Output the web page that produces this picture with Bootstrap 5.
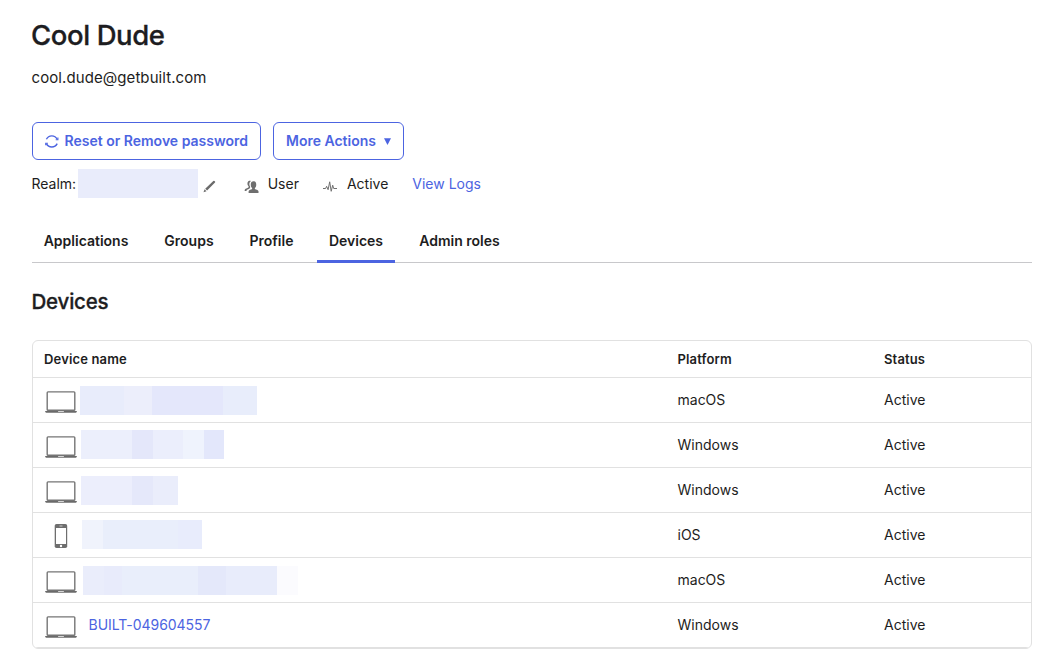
<!DOCTYPE html>
<html lang="en">
<head>
<meta charset="utf-8">
<meta name="viewport" content="width=device-width, initial-scale=1">
<title>Cool Dude - Devices</title>
<link href="https://cdn.jsdelivr.net/npm/bootstrap@5.3.0/dist/css/bootstrap.min.css" rel="stylesheet">
<style>
:root{--ink:#1d1d21;--brand:#4c64e1;--rule:#e1e1e1}
body{font:14px/20px Inter,"Liberation Sans",sans-serif;color:var(--ink);background:#fff;overflow:hidden}
.page{width:1000px;margin-left:32px;padding-top:18px}
.page svg{display:block;flex:none}
.user-name{font-size:27.5px;line-height:34px;font-weight:500;letter-spacing:-.4px;margin:0 0 0 -1px;-webkit-text-stroke:.3px}
.user-mail{font-size:15px;line-height:20px;letter-spacing:.08px;margin:16px 0 34px -.5px}
.btn-act{--bs-btn-color:var(--brand);--bs-btn-border-color:var(--brand);--bs-btn-font-weight:600;--bs-btn-font-size:14px;--bs-btn-line-height:20px;--bs-btn-padding-x:12px;--bs-btn-padding-y:8px;--bs-btn-border-radius:6px;height:38px;white-space:nowrap}
.w-reset{width:229px}
.w-more{width:131px}
.meta{height:29px;margin:9px 0 0 -.5px}
.blur-bar{height:29px;flex:none}
.tabs{height:44px;margin-top:21px;border-bottom:1px solid #c8c8cb;--bs-nav-link-color:var(--ink)}
.tabs .nav-link{font-size:14px;line-height:20px;font-weight:600;padding:12px 0 8px;height:44px;text-align:center;border-bottom:3px solid transparent;white-space:nowrap}
.tabs .nav-link.active{border-color:var(--brand);color:var(--ink)}
.section-title{font-size:20.5px;line-height:26px;font-weight:500;letter-spacing:-.2px;margin:26px 0 25px -.5px;-webkit-text-stroke:.3px}
.panel{border:1px solid var(--rule);border-radius:6px;height:309px;overflow:hidden}
.devices{--bs-table-color:var(--ink);--bs-table-bg:transparent;table-layout:fixed;border-collapse:separate;border-spacing:0;margin:0}
.devices>:not(caption)>*>*{border-bottom:1px solid var(--rule);padding:0 0 0 12px;vertical-align:middle}
.devices>:not(caption)>*>:first-child{padding-left:11px}
.devices thead th{height:37px;font-size:13px;line-height:18px;font-weight:600;letter-spacing:.15px}
.devices tbody td{height:45px}
.c-name{width:632.5px}
.c-platform{width:206.5px}
.device{height:44px}
.device .glyph{width:32px;margin:4px .5px 0 .5px}
.device .phone{margin-top:2px}
.r0{width:120px;margin-left:2px;background:#e9ecfb}
.r1{width:177px;margin-left:3px;background:linear-gradient(90deg,#e8ecfb 44px,#eceefb 44px 72px,#e4e7fb 72px 143px,#e8edfb 143px)}
.r2{width:143px;margin:-2px 0 0 4px;background:linear-gradient(90deg,#eceffc 51px,#e4e7fa 51px 72px,#ebeefc 72px 102px,#eff3fd 102px 123px,#e3e7fb 123px)}
.r3{width:97px;margin-left:4px;background:linear-gradient(90deg,#eceefc 51px,#e5e8fa 51px 72px,#eaedfb 72px)}
.r4{width:120px;margin:-2px 0 0 5px;background:linear-gradient(90deg,#f0f3fc 21px,#e9eefb 21px 96px,#e8ecfc 96px)}
.r5{width:215px;margin-left:6px;background:linear-gradient(90deg,#eaedfb 21px,#e8ebfb 21px 39px,#e9eefb 39px 115px,#e4e8fa 115px 143px,#e8ecfb 143px 194px,#fbfbfe 194px)}
.link-brand{color:var(--brand);text-decoration:none}
.serial{margin-left:11.500px;letter-spacing:-.03px}
</style>
</head>
<body>
<svg width="0" height="0" class="position-absolute" aria-hidden="true">
  <symbol id="laptop" viewBox="0 0 32 23">
    <rect x="2.200" y=".9" width="27.600" height="18.300" rx=".8" fill="#fff" stroke="#757575" stroke-width="1.400"/>
    <path d="M.2 20h31.600v.9q-.8.9-2.400.9H2.600Q1 21.800.2 20.900z" fill="#6a6a6a"/>
    <path d="M13 20h6v.4q-.5.5-1 .5h-4q-.5 0-1-.5z" fill="#d5d5d5"/>
  </symbol>
</svg>
<main class="page">
  <h1 class="user-name">Cool Dude</h1>
  <p class="user-mail">cool.dude@getbuilt.com</p>

  <div class="d-flex" style="gap:12px">
    <button class="btn btn-act w-reset d-flex align-items-center" type="button">
      <svg width="14" height="13" viewBox="0 0 14 13" fill="none" stroke="#4c64e1" stroke-width="1.400"><path d="M1.400 4.300C2.500 2.100 4.400.9 6.800.9s4.300 1.200 5.400 3.400M12.200 8.600C11.100 10.800 9.200 12 6.800 12s-4.300-1.200-5.400-3.400"/><path d="M12.900 2.600v2.100h-2.200M.7 10.300V8.200h2.200" stroke-width="1.100"/></svg>
      <span style="margin-left:5.500px">Reset or Remove password</span>
    </button>
    <button class="btn btn-act w-more d-flex align-items-center" type="button">
      <span>More Actions</span>
      <svg width="7" height="7" viewBox="0 0 7 7" style="margin-left:7.500px"><path d="M0 .3h7L3.500 6.900z" fill="#4c64e1"/></svg>
    </button>
  </div>

  <div class="meta d-flex align-items-center">
    <span>Realm:</span><span class="blur-bar r0"></span>
    <svg width="13" height="13" viewBox="0 0 13 13" style="margin:5px 0 0 4.500px"><path d="M.5 12.300l1.100-3 1.900 1.900zM2.200 8.700L10.300 .9q.6-.5 1.200 0l.5.5q.5.600 0 1.200L4.100 10.600z" fill="#6b6b6b"/></svg>
    <svg width="15" height="13" viewBox="0 0 15 13" style="margin:6px 0 0 28.500px" fill="#6e6e6e"><path d="M4.600 11.900V13H14.500v-1.700c0-1.200-2.800-1.700-3.500-2.200-.3-.4-.2-1 .1-1.400 1-.9 1.200-2 1.100-3.700C12.100 2.200 11.100 1.200 9.500 1.200S6.900 2.200 6.800 4c-.1 1.700.1 2.800 1.100 3.700.3.400.4 1 .1 1.400-.7.500-3.400 1-3.400 2.200z"/><path d="M6.900.9C5.700.3 3.800.7 3.500 2.800c-.2 1.900.1 2.400 1 3.400.3.500.2 1-.2 1.300C3.600 8 .8 8.600.7 10v1H2.600V10l2.700-1.300q1.300-.8.800-2.200C5 5.200 4.900 2 6.900.9z"/></svg>
    <span style="margin-left:8.500px">User</span>
    <svg width="14" height="11" viewBox="0 0 14 11" style="margin:5px 0 0 24px" fill="none" stroke="#707070" stroke-linejoin="round"><path d="M0 7.500h2.600l1-2.200 1.500 3.400L6.700.8l1.500 9.500 1.500-6.100 1 3.300H14"/></svg>
    <span style="margin-left:10px">Active</span>
    <a class="link-brand" href="#" style="margin-left:24px">View Logs</a>
  </div>

  <nav class="nav tabs flex-nowrap">
    <a class="nav-link" href="#" style="width:108px">Applications</a>
    <a class="nav-link" href="#" style="width:74px;margin-left:12px">Groups</a>
    <a class="nav-link" href="#" style="width:67px;margin-left:12px">Profile</a>
    <a class="nav-link active" href="#" style="width:78px;margin-left:12px">Devices</a>
    <a class="nav-link" href="#" style="width:105px;margin-left:12px">Admin roles</a>
  </nav>

  <h2 class="section-title">Devices</h2>

  <div class="panel">
    <table class="table devices">
      <thead><tr><th class="c-name">Device name</th><th class="c-platform">Platform</th><th>Status</th></tr></thead>
      <tbody>
        <tr><td><div class="device d-flex align-items-center"><svg class="glyph" height="23"><use href="#laptop"/></svg><span class="blur-bar r1"></span></div></td><td>macOS</td><td>Active</td></tr>
        <tr><td><div class="device d-flex align-items-center"><svg class="glyph" height="23"><use href="#laptop"/></svg><span class="blur-bar r2"></span></div></td><td>Windows</td><td>Active</td></tr>
        <tr><td><div class="device d-flex align-items-center"><svg class="glyph" height="23"><use href="#laptop"/></svg><span class="blur-bar r3"></span></div></td><td>Windows</td><td>Active</td></tr>
        <tr><td><div class="device d-flex align-items-center"><svg class="glyph phone" height="24" viewBox="0 0 32 24"><rect x="9.700" y="0" width="12.500" height="24" rx="1.800" fill="#6e6e6e"/><path d="M11 4h10v16H11z" fill="#fff"/><path d="M14.500 2h3" stroke="#ccc"/><circle cx="16" cy="22" r="1.200" fill="#fff"/></svg><span class="blur-bar r4"></span></div></td><td>iOS</td><td>Active</td></tr>
        <tr><td><div class="device d-flex align-items-center"><svg class="glyph" height="23"><use href="#laptop"/></svg><span class="blur-bar r5"></span></div></td><td>macOS</td><td>Active</td></tr>
        <tr><td><div class="device d-flex align-items-center"><svg class="glyph" height="23"><use href="#laptop"/></svg><a class="link-brand serial" href="#">BUILT-049604557</a></div></td><td>Windows</td><td>Active</td></tr>
      </tbody>
    </table>
  </div>
</main>
<script src="https://cdn.jsdelivr.net/npm/bootstrap@5.3.0/dist/js/bootstrap.bundle.min.js"></script>
</body>
</html>
